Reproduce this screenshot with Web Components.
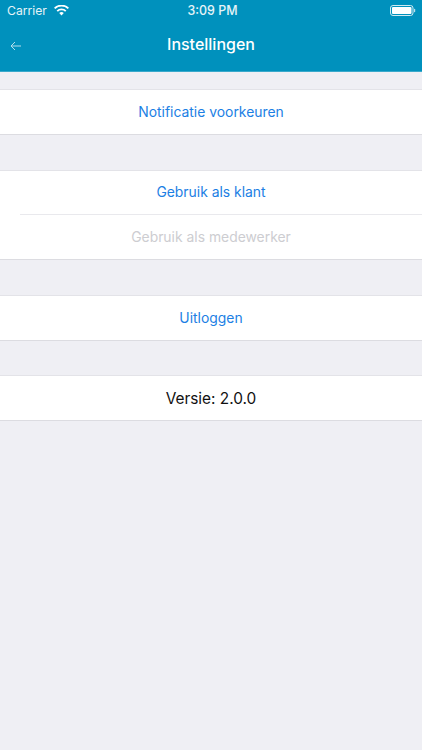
<!DOCTYPE html>
<html>
<head>
<meta charset="utf-8">
<style>
  html, body { margin: 0; padding: 0; background: #efeff4; }
  body { font-family: Inter, "Liberation Sans", sans-serif; width: 422px; height: 750px; overflow: hidden; }
</style>
</head>
<body>
<app-header title="Instellingen"></app-header>
<settings-page>
  <settings-group style="margin-top:17px">
    <settings-row kind="link">Notificatie voorkeuren</settings-row>
  </settings-group>
  <settings-group style="margin-top:35px">
    <settings-row kind="link" divider>Gebruik als klant</settings-row>
    <settings-row kind="disabled">Gebruik als medewerker</settings-row>
  </settings-group>
  <settings-group style="margin-top:35px">
    <settings-row kind="link">Uitloggen</settings-row>
  </settings-group>
  <settings-group style="margin-top:34px">
    <settings-row kind="plain">Versie: 2.0.0</settings-row>
  </settings-group>
</settings-page>
<script>
class AppHeader extends HTMLElement {
  constructor() {
    super();
    this.attachShadow({ mode: 'open' });
    this.shadowRoot.innerHTML = `
    <style>
      :host { display: block; height: 72px; box-sizing: border-box; background: #0091bd; color: #fff; border-bottom: 1px solid #3aa9cb; }
      #status { height: 21px; display: grid; grid-template-columns: 1fr auto 1fr; align-items: center; padding: 0 6px 0 7px; font-size: 12.2px; color: #e6f4f8; }
      #left { display: flex; align-items: center; gap: 7px; }
      #time { font-weight: 500; font-size: 12.4px; padding-left: 2px; }
      #right { display: flex; justify-content: flex-end; }
      #nav { height: 49px; display: grid; grid-template-columns: 1fr auto 1fr; align-items: center; padding: 0 10px; }
      h1 { margin: 0; font-size: 16px; font-weight: 500; padding-bottom: 3px; }
      #back { display: flex; }
    </style>
    <div id="status">
      <div id="left">
        <span>Carrier</span>
        <svg width="15" height="11" viewBox="0 0 15 11"><path d="M7.5 10.6 5.2 8.1a3.3 3.3 0 0 1 4.6 0z M3.9 6.8 2.6 5.4a7 7 0 0 1 9.8 0l-1.3 1.4a5.2 5.2 0 0 0-7.2 0z M1.3 4.1 0 2.7a10.8 10.8 0 0 1 15 0l-1.3 1.4a9 9 0 0 0-12.4 0z" fill="#fff"/></svg>
      </div>
      <span id="time">3:09 PM</span>
      <div id="right">
        <svg width="26" height="11" viewBox="0 0 26 11"><rect x="0.5" y="0.5" width="22.5" height="10" rx="2.5" fill="none" stroke="#cfeaf2"/><rect x="2" y="2" width="19.5" height="7" rx="1" fill="#fff"/><rect x="24" y="3.8" width="1.2" height="3.4" rx="0.6" fill="#bfe2ee"/></svg>
      </div>
    </div>
    <div id="nav">
      <div id="back"><svg width="12" height="10" viewBox="0 0 12 10"><path d="M11 5H1.2M5 1 1 5l4 4" fill="none" stroke="#b6deeb" stroke-width="1"/></svg></div>
      <h1></h1>
      <div></div>
    </div>`;
  }
  connectedCallback() {
    this.shadowRoot.querySelector('h1').textContent = this.getAttribute('title');
  }
}

class SettingsPage extends HTMLElement {
  constructor() {
    super();
    this.attachShadow({ mode: 'open' });
    this.shadowRoot.innerHTML = `
    <style>
      :host { display: flex; flex-direction: column; }
    </style>
    <slot></slot>`;
  }
}

class SettingsGroup extends HTMLElement {
  constructor() {
    super();
    this.attachShadow({ mode: 'open' });
    this.shadowRoot.innerHTML = `
    <style>
      :host { display: block; background: #fff; border-top: 1px solid #e3e3e8; border-bottom: 1px solid #dcdce1; }
    </style>
    <slot></slot>`;
  }
}

class SettingsRow extends HTMLElement {
  constructor() {
    super();
    this.attachShadow({ mode: 'open' });
    this.shadowRoot.innerHTML = `
    <style>
      :host { display: block; padding-left: 20px; font-size: 13.9px; }
      #inner { height: 44px; box-sizing: border-box; display: flex; align-items: center; justify-content: center; padding: 0 20px 0 0; }
      :host([divider]) #inner { border-bottom: 1px solid #e9e9ed; padding-bottom: 2px; }
      :host([kind="link"]) { color: #1c80e4; }
      :host([kind="disabled"]) { color: #cdcdd1; }
      :host([kind="plain"]) { color: #111; font-size: 15.4px; }
    </style>
    <div id="inner"><slot></slot></div>`;
  }
}

customElements.define('app-header', AppHeader);
customElements.define('settings-page', SettingsPage);
customElements.define('settings-group', SettingsGroup);
customElements.define('settings-row', SettingsRow);
</script>
</body>
</html>
